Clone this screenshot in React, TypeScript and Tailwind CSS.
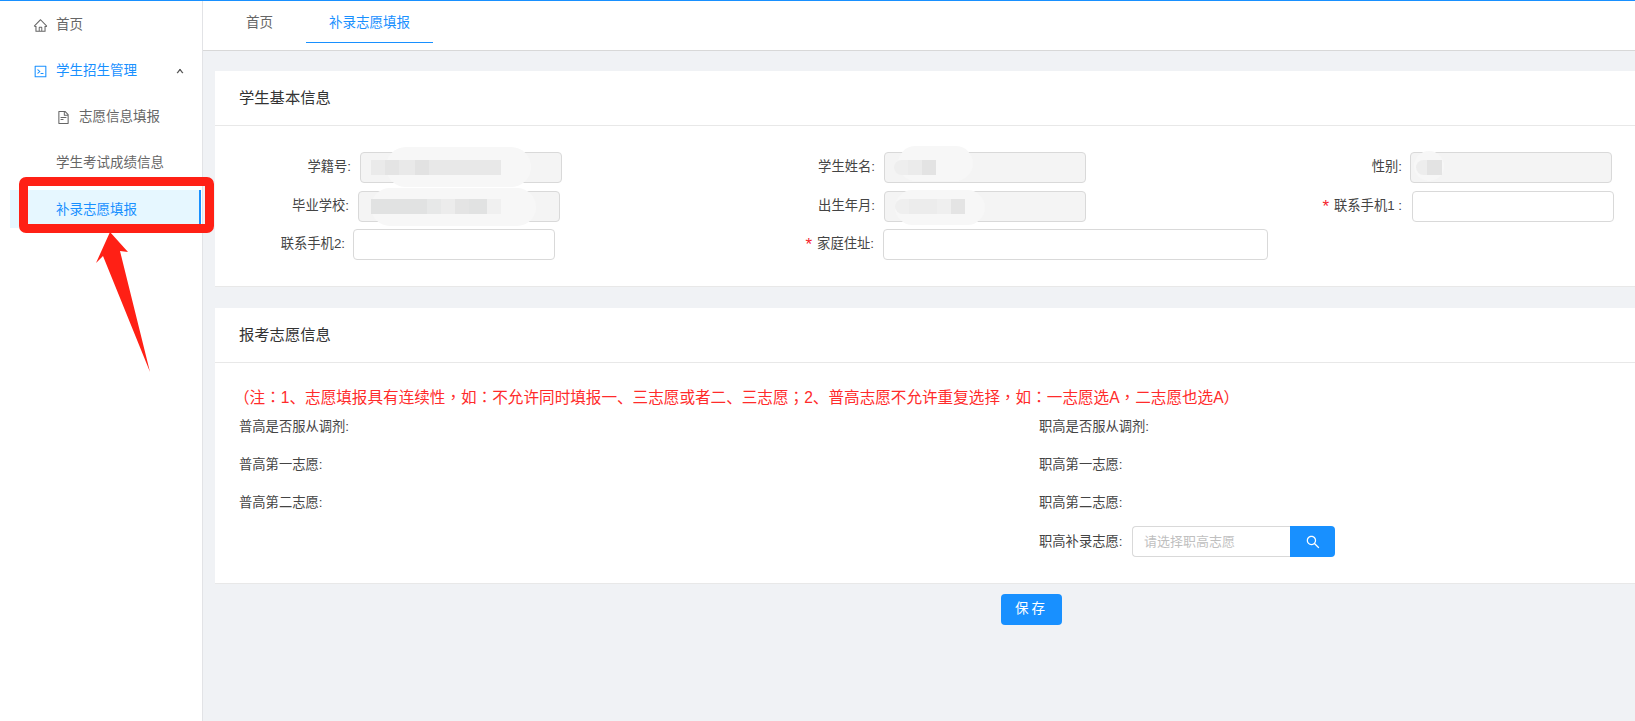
import type { ReactNode } from "react";
import { AiOutlineCode, AiOutlineFileText, AiOutlineHome, AiOutlineSearch, AiOutlineUp } from "react-icons/ai";

const FONT = "font-['Liberation_Sans','Noto_Sans_CJK_SC',sans-serif]";
const NOTE =
  "（注：1、志愿填报具有连续性，如：不允许同时填报一、三志愿或者二、三志愿；2、普高志愿不允许重复选择，如：一志愿选A，二志愿也选A）";

interface IFieldProps {
  label: string;
  labelWidth: string;
  inputWidth: string;
  gap?: string;
  required?: boolean;
  disabled?: boolean;
  children?: ReactNode;
}

const Field = ({ label, labelWidth, inputWidth, gap = "ml-[8px]", required, disabled, children }: IFieldProps) => (
  <>
    <div className={`${labelWidth} shrink-0 text-right text-[13.3px] leading-[30px] text-[#444]`}>
      {required && <span className="mr-[5px] align-[-2px] text-[17px] leading-none text-[#f5222d]">*</span>}
      {label}
    </div>
    <div
      className={`${gap} ${inputWidth} relative h-[31px] shrink-0 rounded border border-[#d9d9d9] ${
        disabled ? "bg-[#f4f4f4]" : "bg-white"
      }`}
    >
      {children}
    </div>
  </>
);

// mosaic blocks over the private values, each item holds width + shade
const Blur = ({ blocks, left }: { blocks: string[]; left: string }) => (
  <div className={`relative flex h-full items-center ${left}`}>
    {blocks.map((b, i) => (
      <div key={i} className={`${b} h-[15px]`} />
    ))}
  </div>
);

const Smear = ({ className }: { className: string }) => (
  <div className={`absolute rounded-full bg-[#f7f7f7] ${className}`} />
);

const CardHeader = ({ title }: { title: string }) => (
  <div className="flex h-[55px] items-center border-b border-[#e8e8e8] pt-[1px] pl-[24px] text-[15.3px] text-[#333]">
    {title}
  </div>
);

const Line = ({ text, className = "" }: { text: string; className?: string }) => (
  <div className={`text-[13.3px] leading-[20px] text-[#444] ${className}`}>{text}</div>
);

export default function App() {
  return (
    <div className={`${FONT} relative flex h-[721px] w-[1635px] overflow-hidden border-t border-[#1890ff] bg-[#f0f2f5]`}>
      {/* Sidebar */}
      <aside className="flex w-[203px] shrink-0 flex-col border-r border-[#e2e3e6] bg-white text-[13.5px] text-[#666]">
        <div className="flex h-[46px] items-center pt-[2px] pl-[33px]">
          <AiOutlineHome className="mr-[8px] text-[15px]" />
          <span>首页</span>
        </div>
        <div className="flex h-[46px] items-center pt-[2px] pl-[33px] text-[#1890ff]">
          <AiOutlineCode className="mr-[8px] text-[15px]" />
          <span>学生招生管理</span>
          <AiOutlineUp className="ml-[39px] text-[8px] text-[#444]" stroke="currentColor" strokeWidth={70} />
        </div>
        <div className="flex h-[46px] items-center pt-[2px] pl-[56px]">
          <AiOutlineFileText className="mr-[8px] text-[15px]" />
          <span>志愿信息填报</span>
        </div>
        <div className="flex h-[47px] items-center pt-[2px] pl-[56px]">学生考试成绩信息</div>
        <div className="mt-[4px] mr-[1px] ml-[10px] flex h-[38px] items-center border-r-[2px] border-[#1890ff] bg-[#e6f7ff] pt-[2px] pl-[46px] text-[#1890ff]">
          补录志愿填报
        </div>
      </aside>

      <main className="min-w-0 flex-1">
        {/* Tabs */}
        <div className="flex h-[50px] items-start border-b border-[#d8d8d8] bg-white text-[13.5px]">
          <div className="ml-[43px] pt-[12px] text-[#666]">首页</div>
          <div className="ml-[33px] h-[42px] border-b border-[#1890ff] px-[23px] pt-[12px] text-[#1890ff]">补录志愿填报</div>
        </div>

        <div className="w-[1432px] pt-[20px] pl-[12px]">
          {/* 学生基本信息 */}
          <section className="h-[216px] border-b border-[#e8e8e8] bg-white">
            <CardHeader title="学生基本信息" />
            <div className="flex pt-[26px]">
              <Field label="学籍号:" labelWidth="w-[136px]" inputWidth="w-[202px]" gap="ml-[9px]" disabled>
                <Smear className="top-[-6px] left-[25px] h-[40px] w-[145px]" />
                <Blur
                  left="pl-[10px]"
                  blocks={[
                    "w-[14px] bg-[#eaeaea]",
                    "w-[14px] bg-[#e4e4e4]",
                    "w-[16px] bg-[#e9e9e9]",
                    "w-[14px] bg-[#e2e2e2]",
                    "w-[72px] bg-[#e8e8e8]",
                  ]}
                />
              </Field>
              <Field label="学生姓名:" labelWidth="w-[313px]" inputWidth="w-[202px]" gap="ml-[9px]" disabled>
                <Smear className="top-[-7px] left-[13px] h-[35px] w-[75px]" />
                <Blur
                  left="pl-[9px]"
                  blocks={["w-[14px] rounded-l-full bg-[#eeeeee]", "w-[14px] bg-[#ebebeb]", "w-[14px] bg-[#e3e3e3]"]}
                />
              </Field>
              <Field label="性别:" labelWidth="w-[316px]" inputWidth="w-[202px]" disabled>
                <Smear className="top-[-2px] left-[3px] h-[30px] w-[30px]" />
                <Blur left="pl-[5px]" blocks={["w-[11px] rounded-l-full bg-[#ededed]", "w-[15px] bg-[#e3e3e3]"]} />
              </Field>
            </div>
            <div className="flex pt-[8px]">
              <Field label="毕业学校:" labelWidth="w-[134px]" inputWidth="w-[202px]" gap="ml-[9px]" disabled>
                <Smear className="top-[-4px] left-[12px] h-[38px] w-[165px]" />
                <Blur
                  left="pl-[12px]"
                  blocks={[
                    "w-[56px] bg-[#e1e2e2]",
                    "w-[14px] bg-[#e7e8e8]",
                    "w-[14px] bg-[#ececec]",
                    "w-[14px] bg-[#e4e4e4]",
                    "w-[18px] bg-[#e1e2e2]",
                    "w-[14px] bg-[#f0f0f0]",
                  ]}
                />
              </Field>
              <Field label="出生年月:" labelWidth="w-[315px]" inputWidth="w-[202px]" gap="ml-[9px]" disabled>
                <Smear className="top-[-2px] left-[10px] h-[35px] w-[90px]" />
                <Blur
                  left="pl-[10px]"
                  blocks={[
                    "w-[14px] rounded-l-full bg-[#efefef]",
                    "w-[28px] bg-[#ececec]",
                    "w-[14px] bg-[#efefef]",
                    "w-[14px] bg-[#e4e4e4]",
                  ]}
                />
              </Field>
              <Field label="联系手机1 :" labelWidth="w-[316px]" inputWidth="w-[202px]" gap="ml-[10px]" required />
            </div>
            <div className="flex pt-[7px]">
              <Field label="联系手机2:" labelWidth="w-[130px]" inputWidth="w-[202px]" />
              <Field label="家庭住址:" labelWidth="w-[319px]" inputWidth="w-[385px]" gap="ml-[9px]" required />
            </div>
          </section>

          {/* 报考志愿信息 */}
          <section className="mt-[21px] h-[276px] border-b border-[#e8e8e8] bg-white">
            <CardHeader title="报考志愿信息" />
            <div className="pt-[21px] pl-[19px] text-[15.6px] leading-[24px] text-[#ff2b2b]">
              {NOTE.split(/([，：；])/).map((part, i) => (
                <span key={i} className={i % 2 ? "font-['Noto_Sans_CJK_TC']" : ""}>
                  {part}
                </span>
              ))}
            </div>
            <div className="flex pt-[7px] pl-[24px]">
              <div className="flex w-[800px] flex-col gap-[18px]">
                <Line text="普高是否服从调剂:" />
                <Line text="普高第一志愿:" />
                <Line text="普高第二志愿:" />
              </div>
              <div className="flex flex-col gap-[18px]">
                <Line text="职高是否服从调剂:" />
                <Line text="职高第一志愿:" />
                <Line text="职高第二志愿:" />
                <div className="-mt-[5px] flex items-center">
                  <Line text="职高补录志愿:" className="w-[93px]" />
                  <div className="flex h-[31px] w-[158px] items-center rounded-l border border-r-0 border-[#d9d9d9] pl-[11px] text-[13px] text-[#bfbfbf]">
                    请选择职高志愿
                  </div>
                  <div className="flex h-[31px] w-[45px] items-center justify-center rounded-r bg-[#1890ff] text-[16px] text-white">
                    <AiOutlineSearch />
                  </div>
                </div>
              </div>
            </div>
          </section>

          <div className="flex pt-[10px] pl-[786px]">
            <button className="h-[31px] w-[61px] rounded bg-[#1890ff] text-[13.5px] tracking-[3px] text-white">保存</button>
          </div>
        </div>
      </main>

      {/* Screenshot annotation */}
      <div className="absolute top-[176px] left-[19px] h-[56px] w-[195px] rounded-[7px] border-[9px] border-[#ff2015]" />
      <svg className="absolute top-0 left-0" width="220" height="380" viewBox="0 0 220 380">
        <polygon points="110,231 128,251 120,250 150,371 103,255 96,262" fill="#ff2015" />
      </svg>
    </div>
  );
}
